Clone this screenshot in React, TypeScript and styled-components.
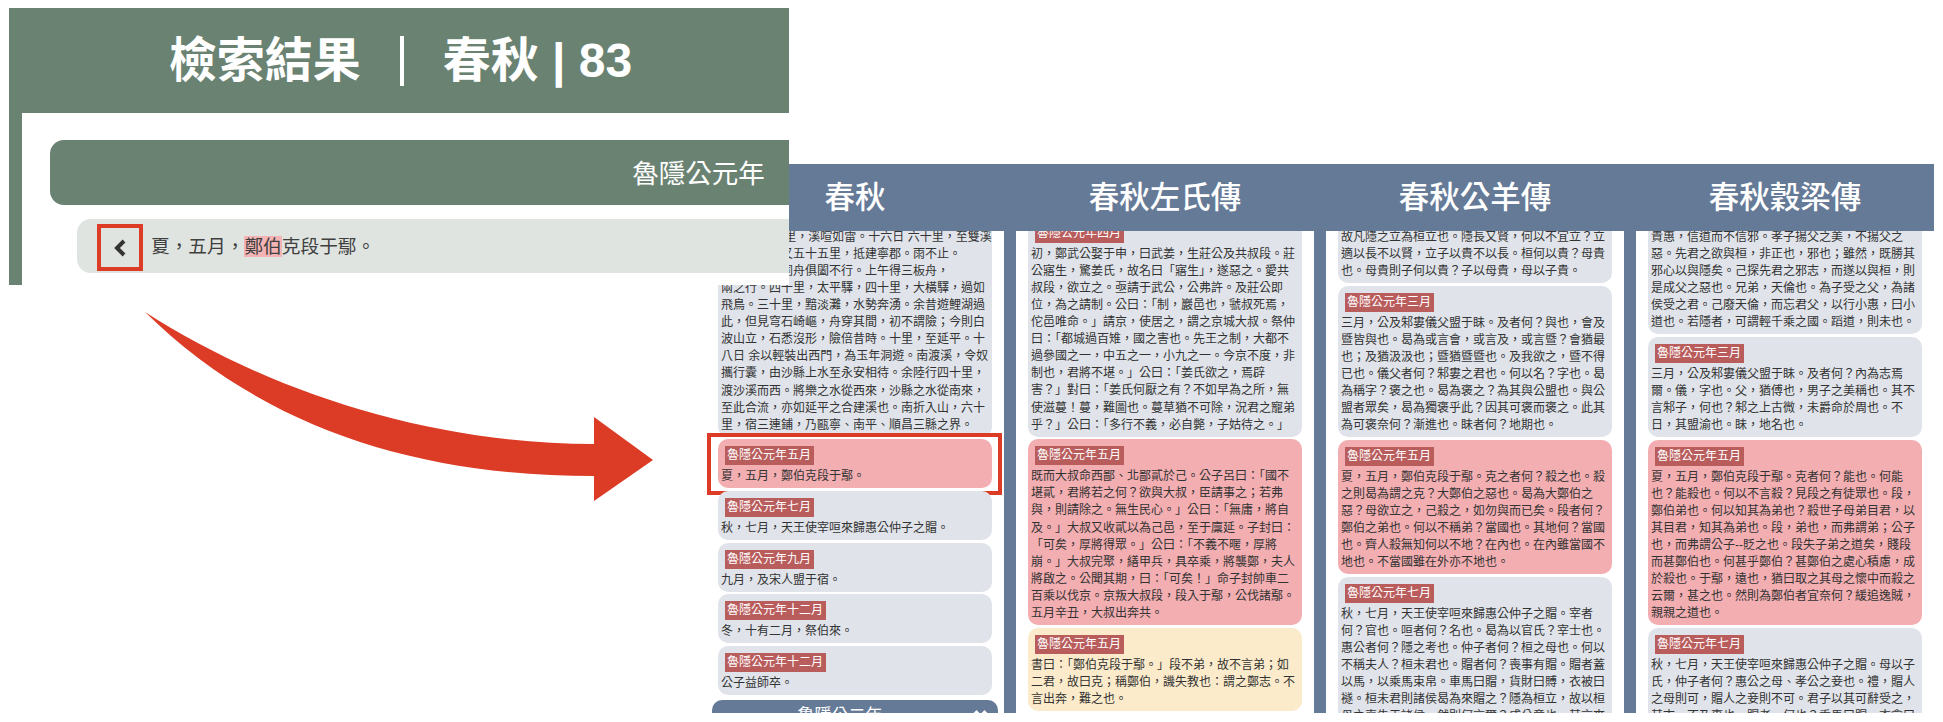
import React from 'react';
import styled, { createGlobalStyle } from 'styled-components';

const GlobalStyle = createGlobalStyle`
  html, body {
    margin: 0;
    padding: 0;
    background: #fff;
  }
  * {
    box-sizing: border-box;
  }
`;

const CJK = `"Liberation Sans", "Noto Sans CJK TC", sans-serif`;
const GREEN = '#6a8272';
const BLUE = '#657a97';
const RED = '#dc3c26';

// classical text uses full width punctuation
const wide = (text: string) =>
  text
    .replace(/,/g, '\uFF0C')
    .replace(/:/g, '\uFF1A')
    .replace(/;/g, '\uFF1B')
    .replace(/\?/g, '\uFF1F')
    .replace(/!/g, '\uFF01');

const Stage = styled.div`
  position: relative;
  width: 1943px;
  height: 722px;
  overflow: hidden;
  padding: 164px 0 0 706px;
  font-family: ${CJK};
`;

/* the cropped search result screenshot that sits over the compare view */
const ResultPanel = styled.section`
  position: absolute;
  z-index: 2;
  left: 9px;
  top: 8px;
  width: 780px;
  height: 277px;
  overflow: hidden;
  background: #fff;
  border-left: 13px solid ${GREEN};
`;

const ResultHeader = styled.h1`
  display: flex;
  align-items: center;
  justify-content: center;
  gap: 39px;
  height: 105px;
  margin: 0 0 0 -13px;
  padding-left: 3px;
  background: ${GREEN};
  color: #fff;
  font-size: 48px;
  font-weight: 700;
  line-height: 1;
`;

const HeaderDivider = styled.span`
  width: 4px;
  height: 50px;
  background: #fff;
`;

const YearBar = styled.div`
  display: flex;
  align-items: center;
  justify-content: center;
  width: 1297px;
  height: 65px;
  margin: 27px 0 0 28px;
  padding-bottom: 2px;
  background: ${GREEN};
  border-radius: 14px;
  color: #fff;
  font-size: 26.5px;
`;

const ResultRow = styled.div`
  display: flex;
  align-items: center;
  gap: 8px;
  width: 1240px;
  height: 54px;
  margin: 14px 0 0 55px;
  padding-left: 20px;
  background: #dfe4e0;
  border-radius: 14px;
  color: #404040;
  font-size: 18.7px;
`;

const RowText = styled.span`
  margin-top: -4px;
`;

const BackButton = styled.span`
  display: flex;
  align-items: center;
  justify-content: center;
  width: 46px;
  height: 47px;
  margin-top: 3px;
  border: 4px solid ${RED};
  color: #333;
`;

const Mark = styled.mark`
  background: #f4b4b6;
  color: inherit;
`;

const Arrow = styled.svg`
  position: absolute;
  z-index: 3;
  left: 0;
  top: 0;
  pointer-events: none;
`;

const ComparePanel = styled.section`
  width: 1228px;
  height: 549px;
  background: ${BLUE};
`;

const CompareHeader = styled.div`
  display: grid;
  grid-template-columns: repeat(4, 298px);
  column-gap: 12px;
  height: 67px;
`;

const HeaderCell = styled.h2`
  margin: 0;
  color: #fff;
  font-size: 30.5px;
  font-weight: 500;
  line-height: 67px;
  text-align: center;
`;

const Columns = styled.div`
  display: grid;
  grid-template-columns: repeat(4, 298px);
  column-gap: 12px;
  height: 482px;
`;

const Column = styled.div`
  height: 482px;
  padding: 0 12px;
  overflow: hidden;
  background: #fff;
`;

/* the columns are scrolled, $scroll is how far the first card has gone under the header */
const CardStack = styled.div<{ $scroll: number }>`
  display: flex;
  flex-direction: column;
  gap: 2.6px;
  margin-top: ${props => -props.$scroll}px;
`;

const CARD_COLORS = {
  plain: '#e0e4ea',
  match: '#f3aeb2',
  note: '#fbebcb',
};

const Card = styled.article<{ $tone: keyof typeof CARD_COLORS; $boxed?: boolean }>`
  position: relative;
  flex: none;
  padding: 7px 3px 3px;
  background: ${props => CARD_COLORS[props.$tone]};
  border-radius: 10px;
  color: #333;
  font-size: 12px;
  line-height: 17.08px;

  ${props =>
    props.$boxed &&
    `
    &::after {
      content: '';
      position: absolute;
      inset: -6px -9.5px -7px -11px;
      border: 4.5px solid ${RED};
    }
  `}
`;

const Tag = styled.div`
  width: fit-content;
  height: 19px;
  margin: 0 0 3px 3.5px;
  padding: 0 2.5px;
  background: #b85c5c;
  color: #fff;
  line-height: 19px;
  white-space: nowrap;
`;

const Line = styled.div`
  white-space: pre;
`;

const ClippedBar = styled.div`
  position: relative;
  flex: none;
  height: 30px;
  margin: 2.6px -6px 0;
  padding-right: 30px;
  background: ${BLUE};
  border-radius: 10px;
  color: #fff;
  font-size: 17px;
  line-height: 31px;
  text-align: center;
`;

const BarChevrons = styled.svg`
  position: absolute;
  right: 9px;
  top: 10px;
`;

type CardData = {
  tag?: string;
  tone?: keyof typeof CARD_COLORS;
  boxed?: boolean;
  lines: string[];
};

const columns: { title: string; scroll: number; cards: CardData[]; tail?: string }[] = [
  {
    title: '春秋',
    scroll: 9.2,
    tail: '魯隱公二年',
    cards: [
      {
        lines: [
          '十五日 六十里,溪喧如雷。十六日 六十里,至雙溪',
          '口,水合。又五十五里,抵建寧郡。雨不止。',
          '水漲數丈,同舟俱闔不行。上午得三板舟,',
          '兩之行。四十里,太平驛,四十里,大橫驛,過如',
          '飛鳥。三十里,黯淡灘,水勢奔湧。余昔遊鯉湖過',
          '此,但見穹石崎嶇,舟穿其間,初不謂險;今則白',
          '波山立,石悉沒形,險倍昔時。十里,至延平。十',
          '八日 余以輕裝出西門,為玉年洞遊。南渡溪,令奴',
          '攜行囊,由沙縣上水至永安相待。余陸行四十里,',
          '渡沙溪而西。將樂之水從西來,沙縣之水從南來,',
          '至此合流,亦如延平之合建溪也。南折入山,六十',
          '里,宿三連鋪,乃甌寧、南平、順昌三縣之界。',
        ],
      },
      { tag: '魯隱公元年五月', tone: 'match', boxed: true, lines: ['夏,五月,鄭伯克段于鄢。'] },
      { tag: '魯隱公元年七月', lines: ['秋,七月,天王使宰咺來歸惠公仲子之賵。'] },
      { tag: '魯隱公元年九月', lines: ['九月,及宋人盟于宿。'] },
      { tag: '魯隱公元年十二月', lines: ['冬,十有二月,祭伯來。'] },
      { tag: '魯隱公元年十二月', lines: ['公子益師卒。'] },
    ],
  },
  {
    title: '春秋左氏傳',
    scroll: 14.2,
    cards: [
      {
        tag: '魯隱公元年四月',
        lines: [
          '初,鄭武公娶于申,曰武姜,生莊公及共叔段。莊',
          '公寤生,驚姜氏,故名曰「寤生」,遂惡之。愛共',
          '叔段,欲立之。亟請于武公,公弗許。及莊公即',
          '位,為之請制。公曰:「制,巖邑也,虢叔死焉,',
          '佗邑唯命。」請京,使居之,謂之京城大叔。祭仲',
          '曰:「都城過百雉,國之害也。先王之制,大都不',
          '過參國之一,中五之一,小九之一。今京不度,非',
          '制也,君將不堪。」公曰:「姜氏欲之,焉辟',
          '害?」對曰:「姜氏何厭之有?不如早為之所,無',
          '使滋蔓!蔓,難圖也。蔓草猶不可除,況君之寵弟',
          '乎?」公曰:「多行不義,必自斃,子姑待之。」',
        ],
      },
      {
        tag: '魯隱公元年五月',
        tone: 'match',
        lines: [
          '既而大叔命西鄙、北鄙貳於己。公子呂曰:「國不',
          '堪貳,君將若之何?欲與大叔,臣請事之;若弗',
          '與,則請除之。無生民心。」公曰:「無庸,將自',
          '及。」大叔又收貳以為己邑,至于廩延。子封曰:',
          '「可矣,厚將得眾。」公曰:「不義不暱,厚將',
          '崩。」大叔完聚,繕甲兵,具卒乘,將襲鄭,夫人',
          '將啟之。公聞其期,曰:「可矣!」命子封帥車二',
          '百乘以伐京。京叛大叔段,段入于鄢,公伐諸鄢。',
          '五月辛丑,大叔出奔共。',
        ],
      },
      {
        tag: '魯隱公元年五月',
        tone: 'note',
        lines: [
          '書曰:「鄭伯克段于鄢。」段不弟,故不言弟;如',
          '二君,故曰克;稱鄭伯,譏失教也:謂之鄭志。不',
          '言出奔,難之也。',
        ],
      },
    ],
  },
  {
    title: '春秋公羊傳',
    scroll: 9.2,
    cards: [
      {
        lines: [
          '故凡隱之立為桓立也。隱長又賢,何以不宜立?立',
          '適以長不以賢,立子以貴不以長。桓何以貴?母貴',
          '也。母貴則子何以貴?子以母貴,母以子貴。',
        ],
      },
      {
        tag: '魯隱公元年三月',
        lines: [
          '三月,公及邾婁儀父盟于眛。及者何?與也,會及',
          '暨皆與也。曷為或言會,或言及,或言暨?會猶最',
          '也;及猶汲汲也;暨猶暨暨也。及我欲之,暨不得',
          '已也。儀父者何?邾婁之君也。何以名?字也。曷',
          '為稱字?褒之也。曷為褒之?為其與公盟也。與公',
          '盟者眾矣,曷為獨褒乎此?因其可褒而褒之。此其',
          '為可褒奈何?漸進也。眛者何?地期也。',
        ],
      },
      {
        tag: '魯隱公元年五月',
        tone: 'match',
        lines: [
          '夏,五月,鄭伯克段于鄢。克之者何?殺之也。殺',
          '之則曷為謂之克?大鄭伯之惡也。曷為大鄭伯之',
          '惡?母欲立之,己殺之,如勿與而已矣。段者何?',
          '鄭伯之弟也。何以不稱弟?當國也。其地何?當國',
          '也。齊人殺無知何以不地?在內也。在內雖當國不',
          '地也。不當國雖在外亦不地也。',
        ],
      },
      {
        tag: '魯隱公元年七月',
        lines: [
          '秋,七月,天王使宰咺來歸惠公仲子之賵。宰者',
          '何?官也。咺者何?名也。曷為以官氏?宰士也。',
          '惠公者何?隱之考也。仲子者何?桓之母也。何以',
          '不稱夫人?桓未君也。賵者何?喪事有賵。賵者蓋',
          '以馬,以乘馬束帛。車馬曰賵,貨財曰賻,衣被曰',
          '襚。桓未君則諸侯曷為來賵之?隱為桓立,故以桓',
          '母之喪告于諸侯。然則何言爾?成公意也。其言來',
        ],
      },
    ],
  },
  {
    title: '春秋穀梁傳',
    scroll: 9.2,
    cards: [
      {
        lines: [
          '貴惠,信道而不信邪。孝子揚父之美,不揚父之',
          '惡。先君之欲與桓,非正也,邪也;雖然,既勝其',
          '邪心以與隱矣。己探先君之邪志,而遂以與桓,則',
          '是成父之惡也。兄弟,天倫也。為子受之父,為諸',
          '侯受之君。己廢天倫,而忘君父,以行小惠,曰小',
          '道也。若隱者,可謂輕千乘之國。蹈道,則未也。',
        ],
      },
      {
        tag: '魯隱公元年三月',
        lines: [
          '三月,公及邾婁儀父盟于眛。及者何?內為志焉',
          '爾。儀,字也。父,猶傅也,男子之美稱也。其不',
          '言邾子,何也?邾之上古微,未爵命於周也。不',
          '日,其盟渝也。眛,地名也。',
        ],
      },
      {
        tag: '魯隱公元年五月',
        tone: 'match',
        lines: [
          '夏,五月,鄭伯克段于鄢。克者何?能也。何能',
          '也?能殺也。何以不言殺?見段之有徒眾也。段,',
          '鄭伯弟也。何以知其為弟也?殺世子母弟目君,以',
          '其目君,知其為弟也。段,弟也,而弗謂弟;公子',
          '也,而弗謂公子--貶之也。段失子弟之道矣,賤段',
          '而甚鄭伯也。何甚乎鄭伯?甚鄭伯之處心積慮,成',
          '於殺也。于鄢,遠也,猶曰取之其母之懷中而殺之',
          '云爾,甚之也。然則為鄭伯者宜奈何?緩追逸賊,',
          '親親之道也。',
        ],
      },
      {
        tag: '魯隱公元年七月',
        lines: [
          '秋,七月,天王使宰咺來歸惠公仲子之賵。母以子',
          '氏,仲子者何?惠公之母、孝公之妾也。禮,賵人',
          '之母則可,賵人之妾則不可。君子以其可辭受之,',
          '其志,不及事也。賵者,何也?乘馬曰賵,衣衾曰',
        ],
      },
    ],
  },
];

const App = () => {
  return (
    <Stage>
      <GlobalStyle />
      <ComparePanel>
        <CompareHeader>
          {columns.map(col => (
            <HeaderCell key={col.title}>{col.title}</HeaderCell>
          ))}
        </CompareHeader>
        <Columns>
          {columns.map(col => (
            <Column key={col.title}>
              <CardStack $scroll={col.scroll}>
                {col.cards.map((card, index) => (
                  <Card key={index} $tone={card.tone ?? 'plain'} $boxed={card.boxed}>
                    {card.tag && <Tag>{card.tag}</Tag>}
                    {card.lines.map((line, idx) => (
                      <Line key={idx}>{wide(line)}</Line>
                    ))}
                  </Card>
                ))}
                {col.tail && (
                  <ClippedBar>
                    {col.tail}
                    <BarChevrons width="17" height="6" viewBox="0 0 17 6" fill="none" stroke="#fff" strokeWidth="2">
                      <path d="M1 5l3.5-3.5L8 5M9 5l3.5-3.5L16 5" />
                    </BarChevrons>
                  </ClippedBar>
                )}
              </CardStack>
            </Column>
          ))}
        </Columns>
      </ComparePanel>

      <ResultPanel>
        <ResultHeader>
          <span>檢索結果</span>
          <HeaderDivider />
          <span>春秋 | 83</span>
        </ResultHeader>
        <YearBar>魯隱公元年</YearBar>
        <ResultRow>
          <BackButton>
            <svg width="14" height="18" viewBox="0 0 14 18" fill="none" stroke="currentColor" strokeWidth="4">
              <path d="M11 2L4 9l7 7" />
            </svg>
          </BackButton>
          <RowText>
            {wide('夏,五月,')}
            <Mark>鄭伯</Mark>克段于鄢。
          </RowText>
        </ResultRow>
      </ResultPanel>

      <Arrow width="1943" height="722" viewBox="0 0 1943 722">
        <path
          d="M145 312C270 392 430 444 594 444L594 417L653 460L594 501L594 476C420 476 265 430 145 312Z"
          fill={RED}
        />
      </Arrow>
    </Stage>
  );
};

export default App;
